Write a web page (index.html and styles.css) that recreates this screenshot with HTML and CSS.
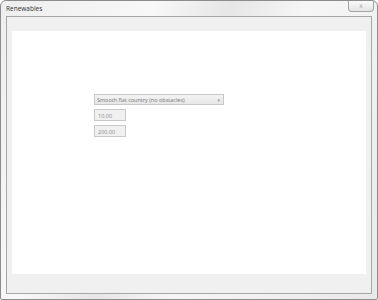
FILE: index.html
```html
<!DOCTYPE html>
<html lang="en">
<head>
    <meta charset="UTF-8">
    <title>Renewables</title>
    <link rel="stylesheet" href="styles.css">
</head>
<body>

<div class="window">
    <div class="titlebar">
        <span class="title">Renewables</span>
        <button class="close-btn">X</button>
    </div>

    <div class="client">
        <div class="panel">
            <div class="form">
                <div class="combo">
                    <span>Smooth flat country (no obstacles)</span>
                    <span class="arrow">&#9662;</span>
                </div>
                <div class="field">10.00</div>
                <div class="field">200.00</div>
            </div>
        </div>
    </div>
</div>

</body>
</html>
```

FILE: styles.css
```css
/* Reset */
* {
    margin: 0;
    padding: 0;
    box-sizing: border-box;
}
body {
    font-family: 'Open Sans', 'DejaVu Sans', sans-serif;
    background: #fff;
    width: 378px;
    height: 300px;
    overflow: hidden;
}

/* Window frame */
.window {
    width: 378px;
    height: 300px;
    border: 1px solid #8c8c8c;
    border-radius: 6px 6px 2px 2px;
    background: linear-gradient(115deg, #eeeeee 0%, #f8f8f8 30%, #e6e6e6 45%, #f6f6f6 60%, #e9e9e9 100%);
    display: flex;
    flex-direction: column;
}

.titlebar {
    height: 15px;
    display: flex;
    align-items: flex-start;
    padding-left: 5px;
}
.title {
    font-size: 6.5px;
    color: #333;
    margin-top: 3px;
}
.close-btn {
    margin-left: auto;
    margin-right: 3px;
    width: 26px;
    height: 11px;
    border: 1px solid #a4a4a4;
    border-top: none;
    border-radius: 0 0 4px 4px;
    background: linear-gradient(#fafafa, #e4e4e4);
    font-family: 'DejaVu Sans', sans-serif;
    font-size: 5px;
    color: #999;
    line-height: 9px;
}

/* Client area */
.client {
    flex: 1;
    margin: 0 5px 5px 5px;
    border: 1px solid #a8a8a8;
    background: #f0f0f0;
    padding: 14px 5px 19px 5px;
    display: flex;
}
.panel {
    flex: 1;
    background: #fff;
    padding: 63px 0 0 82px;
}

/* Form controls */
.form {
    display: flex;
    flex-direction: column;
    align-items: flex-start;
    gap: 4px;
}
.combo {
    width: 130px;
    height: 11px;
    border: 1px solid #c8c8c8;
    background: linear-gradient(#f4f4f4, #e6e6e6);
    font-size: 5.5px;
    color: #777;
    display: flex;
    align-items: center;
    justify-content: space-between;
    padding: 0 3px 0 2px;
}
.arrow {
    font-size: 5px;
    color: #999;
}
.field {
    width: 32px;
    height: 12px;
    border: 1px solid #c8c8c8;
    background: #f0f0f0;
    font-size: 5.5px;
    color: #888;
    padding: 2px 0 0 3px;
}
```
